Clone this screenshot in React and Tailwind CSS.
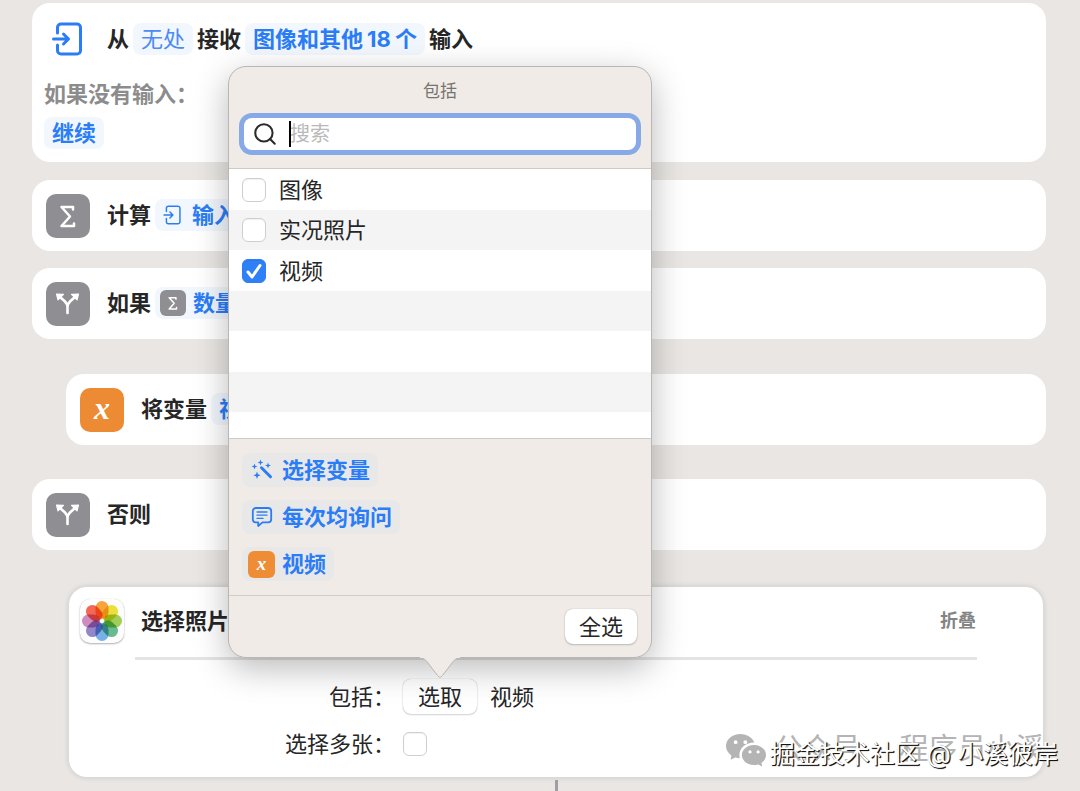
import { useState } from "react";
import { Search } from "lucide-react";
import { BsWechat } from "react-icons/bs";

const petals = [
  { angle: 0, color: "#f79c2c" },
  { angle: 45, color: "#ecdc2a" },
  { angle: 90, color: "#9aca4a" },
  { angle: 135, color: "#5cb487" },
  { angle: 180, color: "#6aa9e2" },
  { angle: 225, color: "#8a7cc4" },
  { angle: 270, color: "#cb82bc" },
  { angle: 315, color: "#f25a45" },
];

function InputIcon({ className, strokeWidth = 3 }) {
  return (
    <svg viewBox="0 0 30 34" className={className} fill="none" stroke="currentColor" strokeWidth={strokeWidth} strokeLinecap="round" strokeLinejoin="round">
      <path d="M5.5 11V5.5A3.5 3.5 0 0 1 9 2H25a3.5 3.5 0 0 1 3.5 3.5v23A3.5 3.5 0 0 1 25 32H9a3.5 3.5 0 0 1-3.5-3.5V23" />
      <path d="M1.5 17H16M11.5 12l5 5-5 5" />
    </svg>
  );
}

function SigmaIcon({ className }) {
  return (
    <svg viewBox="0 0 44 44" className={className} fill="none" stroke="white" strokeWidth="2.5" strokeLinecap="round" strokeLinejoin="round">
      <path d="M27 15.5V13H15.500l8.500 9.500-8.500 9.500H28v-2.500" />
    </svg>
  );
}

function BranchIcon({ className }) {
  return (
    <svg viewBox="0 0 44 44" className={className} fill="none" stroke="white" strokeWidth="2.6" strokeLinecap="round" strokeLinejoin="round">
      <path d="M21.500 31v-6c0-2.500-1-4-2.500-5.500L14 15M21.500 25c0-2.500 1-4 2.500-5.500L29 15" />
      <path d="M10.500 12l7 .3-5.500 5.500zM32.500 12l-7 .3 5.500 5.500z" fill="white" strokeWidth="1.2" />
    </svg>
  );
}

function PhotosIcon() {
  return (
    <span className="block size-11 shrink-0 rounded-[10px] bg-[#fdfdfe] shadow-[0_0_1px_rgba(0,0,0,0.15),0_1px_2px_rgba(0,0,0,0.3)]">
      <svg viewBox="0 0 44 44" className="size-full isolate">
        {petals.map((petal) => (
          <rect
            key={petal.angle}
            x="15.5"
            y="2"
            width="13"
            height="18"
            rx="6.5"
            fill={petal.color}
            fillOpacity="0.92"
            transform={`rotate(${petal.angle} 22 22)`}
            className="mix-blend-multiply"
          />
        ))}
      </svg>
    </span>
  );
}

function WandIcon() {
  return (
    <svg viewBox="0 0 22 22" className="size-[22px]" fill="currentColor">
      <path d="M10.500 8.800l9 9" stroke="currentColor" strokeWidth="3" strokeLinecap="round" />
      <path d="M3.500 4.500l.8 2.200 2.200.8-2.200.8-.8 2.200-.8-2.200-2.200-.8 2.200-.8zM9.500.5l.8 2.200 2.200.8-2.200.8-.8 2.200-.8-2.200-2.200-.8 2.200-.8zM17 3.500l.8 2.200 2.200.8-2.200.8-.8 2.200-.8-2.200-2.200-.8 2.200-.8zM6 12.500l1 2.700 2.700 1-2.700 1-1 2.700-1-2.700-2.700-1 2.700-1z" />
    </svg>
  );
}

function AskIcon() {
  return (
    <svg viewBox="0 0 22 22" className="size-[22px]" fill="none" stroke="currentColor" strokeLinecap="round" strokeLinejoin="round">
      <path d="M5 2h12a3.200 3.200 0 0 1 3.200 3.200v8A3.200 3.200 0 0 1 17 16.400h-5.500L7.200 20v-3.600H5a3.200 3.200 0 0 1-3.200-3.200v-8A3.200 3.200 0 0 1 5 2z" strokeWidth="1.8" />
      <path d="M6 6h10M6 9.200h10M6 12.400h6" strokeWidth="1.3" />
    </svg>
  );
}

function VariableTile({ small }) {
  return (
    <span
      className={
        small
          ? "flex size-[27px] items-center justify-center rounded-md bg-[#ee8d35] pb-0.5 font-['Liberation_Serif',serif] text-[19px] leading-none font-bold text-white italic"
          : "flex size-11 shrink-0 items-center justify-center rounded-[10px] bg-[#ec8b34] pb-1 font-['Liberation_Serif',serif] text-[32px] leading-none font-bold text-white italic"
      }
    >
      x
    </span>
  );
}

function GrayTile({ children }) {
  return <span className="block size-11 shrink-0 rounded-[10px] bg-[#8f8e93]">{children}</span>;
}

function Pill({ children, light }) {
  return (
    <button
      className={`flex h-8 items-center gap-[7px] rounded-lg bg-[#f2f7fe] px-2 whitespace-nowrap ${
        light ? "font-normal text-[#4c8bf5]" : "font-bold text-[#2a7df6]"
      }`}
    >
      {children}
    </button>
  );
}

function ActionCard({ icon, title, indent, children }) {
  return (
    <section className={`flex h-[71px] items-center gap-[17px] rounded-[18px] bg-white pl-3.5 ${indent ? "ml-[34px]" : ""}`}>
      {icon}
      <div className="flex items-center gap-1 pb-0.5">
        <h2 className="font-bold">{title}</h2>
        {children}
      </div>
    </section>
  );
}

function Checkbox({ id, checked, onChange }) {
  return (
    <span className="grid size-6 shrink-0">
      <input
        id={id}
        type="checkbox"
        checked={checked}
        onChange={onChange}
        className="col-start-1 row-start-1 size-6 appearance-none rounded-md border border-[#cfcfcf] bg-white shadow-[inset_0_1px_1px_rgba(0,0,0,0.06)] checked:border-[#2f80f6] checked:bg-[#2f80f6]"
      />
      {checked && (
        <svg viewBox="0 0 24 24" className="pointer-events-none col-start-1 row-start-1 size-6" fill="none" stroke="white" strokeWidth="3" strokeLinecap="round" strokeLinejoin="round">
          <path d="M6 13l4 5L18 6.500" />
        </svg>
      )}
    </span>
  );
}

function MenuAction({ icon, children }) {
  return (
    <button className="flex h-[34px] items-center rounded-lg bg-[#e9e8e9] pr-2 pl-1.5 font-bold text-[#2a7df6]">
      <span className="mr-[7px] flex w-[27px] justify-center">{icon}</span>
      {children}
    </button>
  );
}

function IncludePopover() {
  const [options, setOptions] = useState([
    { id: "image", label: "图像", checked: false },
    { id: "live", label: "实况照片", checked: false },
    { id: "video", label: "视频", checked: true },
  ]);

  const toggle = (id) => {
    setOptions(options.map((o) => (o.id === id ? { ...o, checked: !o.checked } : o)));
  };

  const selectAll = () => {
    setOptions(options.map((o) => ({ ...o, checked: true })));
  };

  return (
    <div
      role="dialog"
      aria-label="包括"
      className="absolute bottom-full left-1/2 z-10 mb-[21px] w-[424px] -translate-x-1/2 rounded-[18px] border border-[#b9b6b3] bg-[#f0ebe6] shadow-[0_10px_34px_rgba(0,0,0,0.28)]"
    >
      <div className="border-b border-[#cfcbc7] px-[15px] pt-3 pb-[18px]">
        <h3 className="text-center text-[17px] leading-6 text-[#77736f]">包括</h3>
        <label className="relative mt-[15px] flex h-8 items-center rounded-lg bg-white pl-2 ring-[5px] ring-[#87a9e6]">
          <Search size={26} strokeWidth={1.9} className="shrink-0 text-[#2b2b2b]" />
          <span className="absolute left-[45px] h-[26px] w-0.5 bg-black" />
          <input
            type="text"
            aria-label="搜索"
            placeholder="搜索"
            className="ml-3 w-full min-w-0 bg-transparent text-xl leading-7 outline-none placeholder:text-[#b9b9b9]"
          />
        </label>
      </div>

      <ul className="bg-white">
        {options.map((option) => (
          <li key={option.id} className="flex h-[41px] items-center gap-[13px] px-[13px] even:h-10 even:bg-[#f4f4f4]">
            <Checkbox id={option.id} checked={option.checked} onChange={() => toggle(option.id)} />
            <label htmlFor={option.id}>{option.label}</label>
          </li>
        ))}
        <li className="h-10 bg-[#f4f4f4]" />
        <li className="h-[41px]" />
        <li className="h-10 bg-[#f4f4f4]" />
        <li className="h-[26px]" />
      </ul>

      <div className="flex flex-col items-start gap-[13px] border-y border-[#cfcbc7] px-[13px] py-3.5">
        <MenuAction icon={<WandIcon />}>选择变量</MenuAction>
        <MenuAction icon={<AskIcon />}>每次均询问</MenuAction>
        <MenuAction icon={<VariableTile small />}>视频</MenuAction>
      </div>

      <div className="flex justify-end px-3.5 py-[13px]">
        <button
          onClick={selectAll}
          className="h-[35px] rounded-lg bg-white px-3.5 shadow-[0_0_1px_rgba(0,0,0,0.3),0_1px_2px_rgba(0,0,0,0.2)]"
        >
          全选
        </button>
      </div>

      <svg viewBox="0 0 48 22" className="absolute top-full left-1/2 h-[22px] w-12 -translate-x-1/2">
        <path d="M0 0C7 0 9 2 12 6L21.500 18.500Q24 22 26.500 18.500L36 6C39 2 41 0 48 0z" fill="#f0ebe6" />
        <path d="M0 .5C7 .5 9 2 12 6L21.500 18.500Q24 22 26.500 18.500L36 6C39 2 41 .5 48 .5" fill="none" stroke="#b9b6b3" />
        <path d="M4 0h40" stroke="#f0ebe6" strokeWidth="2" />
      </svg>
    </div>
  );
}

function ChoosePhotosCard() {
  const [multiple, setMultiple] = useState(false);

  return (
    <section className="mt-[37px] mr-[3px] ml-[37px] rounded-[18px] bg-white pb-[17px] shadow-[0_0_4px_2px_rgba(0,0,0,0.08)]">
      <div className="flex items-center gap-[17px] pt-3 pr-[67px] pl-[11px]">
        <PhotosIcon />
        <h2 className="flex-1 font-bold">选择照片</h2>
        <button className="text-lg font-bold text-[#848484]">折叠</button>
      </div>
      <hr className="mt-3.5 mr-[66px] ml-[66px] border-t-[3px] border-[#e4e4e4]" />

      <div className="mt-[19px] grid grid-cols-[326px_1fr] items-center gap-x-2 gap-y-3.5">
        <span className="text-right">包括：</span>
        <div className="flex items-center gap-[13px]">
          <div className="relative">
            <button className="block h-[35px] rounded-lg bg-white px-[15px] shadow-[0_0_1px_rgba(0,0,0,0.3),0_1px_2px_rgba(0,0,0,0.16)]">
              选取
            </button>
            <IncludePopover />
          </div>
          <span>视频</span>
        </div>
        <label htmlFor="multiple" className="text-right">
          选择多张：
        </label>
        <Checkbox id="multiple" checked={multiple} onChange={() => setMultiple(!multiple)} />
      </div>
    </section>
  );
}

function Watermark() {
  return (
    <div className="pointer-events-none absolute right-[22px] bottom-[19px] z-20 grid">
      <div className="col-start-1 row-start-1 -ml-11 flex items-center gap-2 self-start text-[29px] leading-9 text-[#b4b4b4]">
        <BsWechat size={40} />
        <span className="whitespace-nowrap">
          公众号<span className="mx-[7px]"> · </span>程序员小溪
        </span>
      </div>
      <span className="col-start-1 row-start-1 mt-[7px] text-[25px] leading-9 whitespace-nowrap text-white [text-shadow:1px_1px_1px_#111,1px_1px_0_#333]">
        掘金技术社区 @ 小溪彼岸
      </span>
    </div>
  );
}

export default function App() {
  return (
    <main
      lang="zh-CN"
      className="relative min-h-screen overflow-hidden bg-[#e9e6e3] pt-[3px] pr-[34px] pl-8 font-['Inter','Noto_Sans_CJK_SC',sans-serif] text-[22px] leading-8 text-[#262626]"
    >
      <section className="rounded-[18px] bg-white pt-5 pb-[13px] pl-3">
        <div className="flex h-8 items-center gap-1 font-bold">
          <InputIcon className="mr-[21px] ml-2 h-[34px] w-[30px] text-[#2a7df6]" />
          <span>从</span>
          <Pill light>无处</Pill>
          <span>接收</span>
          <Pill>
            <span>
              图像和其他<span className="mx-1">18</span>个
            </span>
          </Pill>
          <span>输入</span>
        </div>
        <p className="mt-[23px] font-bold text-[#8c8c8c]">如果没有输入：</p>
        <div className="mt-[7px] flex">
          <Pill>继续</Pill>
        </div>
      </section>

      <div className="mt-[18px] flex flex-col gap-[17px]">
        <ActionCard icon={<GrayTile><SigmaIcon className="size-11" /></GrayTile>} title="计算">
          <Pill>
            <InputIcon className="mr-1 h-5 w-[18px]" strokeWidth={2.5} />
            输入
          </Pill>
        </ActionCard>
        <ActionCard icon={<GrayTile><BranchIcon className="size-11" /></GrayTile>} title="如果">
          <Pill>
            <span className="-ml-[3px] block size-[26px] rounded-md bg-[#8f8e93]">
              <SigmaIcon className="size-[26px]" />
            </span>
            数量
          </Pill>
        </ActionCard>
      </div>

      <div className="mt-[35px] flex flex-col gap-[34px]">
        <ActionCard indent icon={<VariableTile />} title="将变量">
          <Pill>视频</Pill>
        </ActionCard>
        <ActionCard icon={<GrayTile><BranchIcon className="size-11" /></GrayTile>} title="否则" />
      </div>

      <ChoosePhotosCard />
      <div className="mt-[3px] h-[11px] pl-[34px]">
        <div className="mx-auto h-full w-[3px] bg-[#a09ea4]" />
      </div>

      <Watermark />
    </main>
  );
}
